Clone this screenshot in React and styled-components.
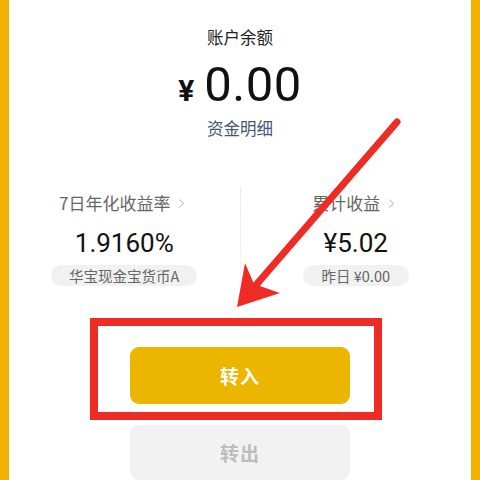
import styled, { createGlobalStyle } from "styled-components";
import { ChevronRight } from "lucide-react";

const GlobalStyle = createGlobalStyle`
  body {
    margin: 0;
    font-family: "Noto Sans CJK SC", "Noto Sans", sans-serif;
    background: #ffffff;
  }
`;

const Page = styled.div`
  position: relative;
  box-sizing: border-box;
  width: 480px;
  height: 480px;
  overflow: hidden;
  background: #ffffff;
  border-left: 9px solid #f2b300;
  border-right: 9px solid #f4b000;
  display: flex;
  flex-direction: column;
  align-items: center;
  padding-top: 25px;
`;

const Caption = styled.div`
  font-size: 16.5px;
  line-height: 24px;
  color: #222;
`;

const Balance = styled.div`
  display: flex;
  align-items: baseline;
  gap: 10px;
  margin-top: 8px;
  height: 56px;
  line-height: 56px;
  color: #111;
  font-family: Roboto, "Noto Sans CJK SC", sans-serif;
`;

const Currency = styled.span`
  font-size: 30px;
  font-weight: 700;
`;

const Amount = styled.span`
  font-size: 49px;
  font-weight: 400;
  letter-spacing: 0.5px;
`;

const DetailLink = styled.a`
  margin-top: 3px;
  font-size: 16.5px;
  line-height: 24px;
  color: #4a5577;
  text-decoration: none;
`;

const Stats = styled.div`
  align-self: stretch;
  display: grid;
  grid-template-columns: 1fr 1px 1fr;
  margin-top: 47px;
`;

const Divider = styled.div`
  background: linear-gradient(#ececec, #f4f4f4 85%, #ffffff);
`;

const StatColumn = styled.div`
  display: flex;
  flex-direction: column;
  align-items: center;
  padding: 4px 0 4px;
`;

const StatTitle = styled.div`
  display: flex;
  align-items: center;
  gap: 4px;
  font-size: 17px;
  line-height: 24px;
  color: #666;
  svg {
    color: #b0b0b0;
  }
`;

const StatValue = styled.div`
  margin-top: 11px;
  font-family: Roboto, "Noto Sans CJK SC", sans-serif;
  font-size: 26px;
  line-height: 34px;
  color: #111;
`;

const Pill = styled.div`
  margin-top: 5px;
  height: 21px;
  line-height: 21px;
  padding: 0 ${(p) => p.$pad}px;
  border-radius: 11px;
  background: #f1f1f1;
  font-size: 14.5px;
  color: #666;
  font-family: "Noto Sans CJK SC", Roboto, sans-serif;
`;

const Highlight = styled.div`
  margin-top: 28px;
  margin-right: 8px;
  border: 8px solid #ee2b25;
  padding: 21px 24px 8px 32px;
`;

const ActionButton = styled.button`
  display: block;
  width: 220px;
  height: 57px;
  border: none;
  border-radius: 9px;
  font-family: "Noto Sans CJK SC", sans-serif;
  font-size: 19px;
  font-weight: 700;
  letter-spacing: 1px;
  background: ${(p) => (p.$primary ? "#ecb500" : "#f2f2f2")};
  color: ${(p) => (p.$primary ? "#ffffff" : "#bdbdbd")};
  margin-top: ${(p) => p.$top || 0}px;
`;

const ArrowLayer = styled.svg`
  position: absolute;
  left: -9px;
  top: 0;
  width: 480px;
  height: 480px;
  pointer-events: none;
`;

function Stat({ title, value, pill, pad }) {
  return (
    <StatColumn>
      <StatTitle>
        {title}
        <ChevronRight size={15} strokeWidth={1.6} />
      </StatTitle>
      <StatValue>{value}</StatValue>
      <Pill $pad={pad}>{pill}</Pill>
    </StatColumn>
  );
}

export default function App() {
  return (
    <>
      <GlobalStyle />
      <Page>
        <Caption>账户余额</Caption>
        <Balance>
          <Currency>¥</Currency>
          <Amount>0.00</Amount>
        </Balance>
        <DetailLink>资金明细</DetailLink>

        <Stats>
          <Stat title="7日年化收益率" value="1.9160%" pill="华宝现金宝货币A" pad={18} />
          <Divider />
          <Stat title="累计收益" value="¥5.02" pill="昨日 ¥0.00" pad={19} />
        </Stats>

        <Highlight>
          <ActionButton $primary>转入</ActionButton>
        </Highlight>
        <ActionButton $top={5}>转出</ActionButton>

        <ArrowLayer viewBox="0 0 480 480">
          <line
            x1="397"
            y1="122"
            x2="256"
            y2="285"
            stroke="#ee2b25"
            strokeWidth="7"
            strokeLinecap="round"
          />
          <polygon points="237,307 245,263 254,284 280,293" fill="#ee2b25" />
        </ArrowLayer>
      </Page>
    </>
  );
}
